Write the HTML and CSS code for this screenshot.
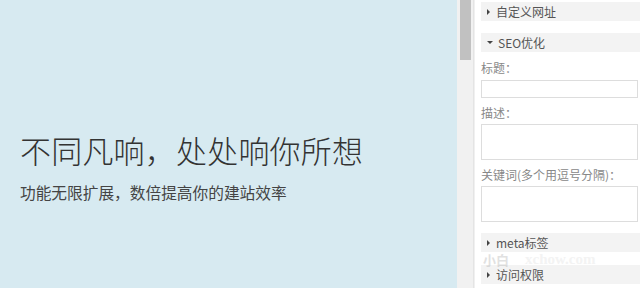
FILE: index.html
```html
<!DOCTYPE html>
<html>
<head>
<meta charset="utf-8">
<link rel="stylesheet" href="styles.css">
</head>
<body>
<div class="page">
  <div class="stage">
    <h1 class="title">不同凡响，处处响你所想</h1>
    <p class="sub">功能无限扩展，数倍提高你的建站效率</p>
  </div>
  <div class="scroll"><div class="thumb"></div></div>
  <div class="panel">
    <div class="head"><span class="arrow right"></span>自定义网址</div>
    <div class="head h2"><span class="arrow down"></span>SEO优化</div>
    <div class="label l1">标题：</div>
    <div class="input"></div>
    <div class="label">描述：</div>
    <div class="area"></div>
    <div class="label">关键词(多个用逗号分隔)：</div>
    <div class="area"></div>
    <div class="head h3"><span class="arrow right"></span>meta标签</div>
    <div class="head h4"><span class="arrow right"></span>访问权限</div>
    <div class="mark"><span class="mk1">小白</span><span class="mk2">xchow.com</span></div>
  </div>
</div>
</body>
</html>
```
FILE: styles.css
```css
html, body { margin: 0; padding: 0; }
body {
  width: 640px; height: 288px; overflow: hidden; background: #fff;
  font-family: "Noto Sans CJK SC", "Noto Sans", sans-serif;
}
.page { display: flex; height: 288px; }
.stage {
  width: 457px; background: #d7eaf1; display: flex; flex-direction: column;
  justify-content: center; padding-left: 20px; box-sizing: border-box; padding-top: 46px;
}
.title { margin: 0; font-size: 31px; font-weight: 300; color: #333; line-height: 40px; letter-spacing: 0.2px; }
.sub { margin: 12px 0 0; font-size: 15.7px; color: #444; line-height: 22px; }
.scroll { width: 17px; background: #f1f1f1; border-right: 1px solid #e4e4e4; box-sizing: border-box; }
.thumb { width: 11px; height: 60px; margin-left: 3px; background: #c1c1c1; }
.panel { flex: 1; padding-left: 6px; padding-top: 2px; position: relative; background: #fff; border-left: 1px solid #f0f0f0; }
.head {
  height: 19px; background: #f3f3f3; font-size: 12px; color: #555; line-height: 19px;
  display: flex; align-items: center; padding-left: 6px;
}
.h2 { margin-top: 12px; }
.arrow { width: 0; height: 0; margin-right: 6px; }
.arrow.right { border-top: 3px solid transparent; border-bottom: 3px solid transparent; border-left: 3px solid #444; }
.arrow.down { border-left: 3px solid transparent; border-right: 3px solid transparent; border-top: 3px solid #444; margin-right: 5px; }
.label { font-size: 12px; color: #888; line-height: 16px; height: 16px; margin: 7px 0 3px; }
.l1 { margin: 8px 0 4px; }
.input { height: 18px; border: 1px solid #ddd; box-sizing: border-box; margin-right: 2px; }
.area { height: 36px; border: 1px solid #ddd; box-sizing: border-box; margin-right: 2px; }
.h3 { margin-top: 11px; }
.h4 { margin-top: 13px; }
.mark { position: absolute; left: 8px; top: 253px; height: 13px; display: flex; align-items: center; gap: 16px; opacity: 0.35; pointer-events: none; line-height: 13px; }
.mk1 { font-size: 13px; color: #aaa; font-weight: bold; }
.mk2 { font-family: "Liberation Serif", serif; font-size: 15px; font-weight: bold; color: #ddd; }
```
